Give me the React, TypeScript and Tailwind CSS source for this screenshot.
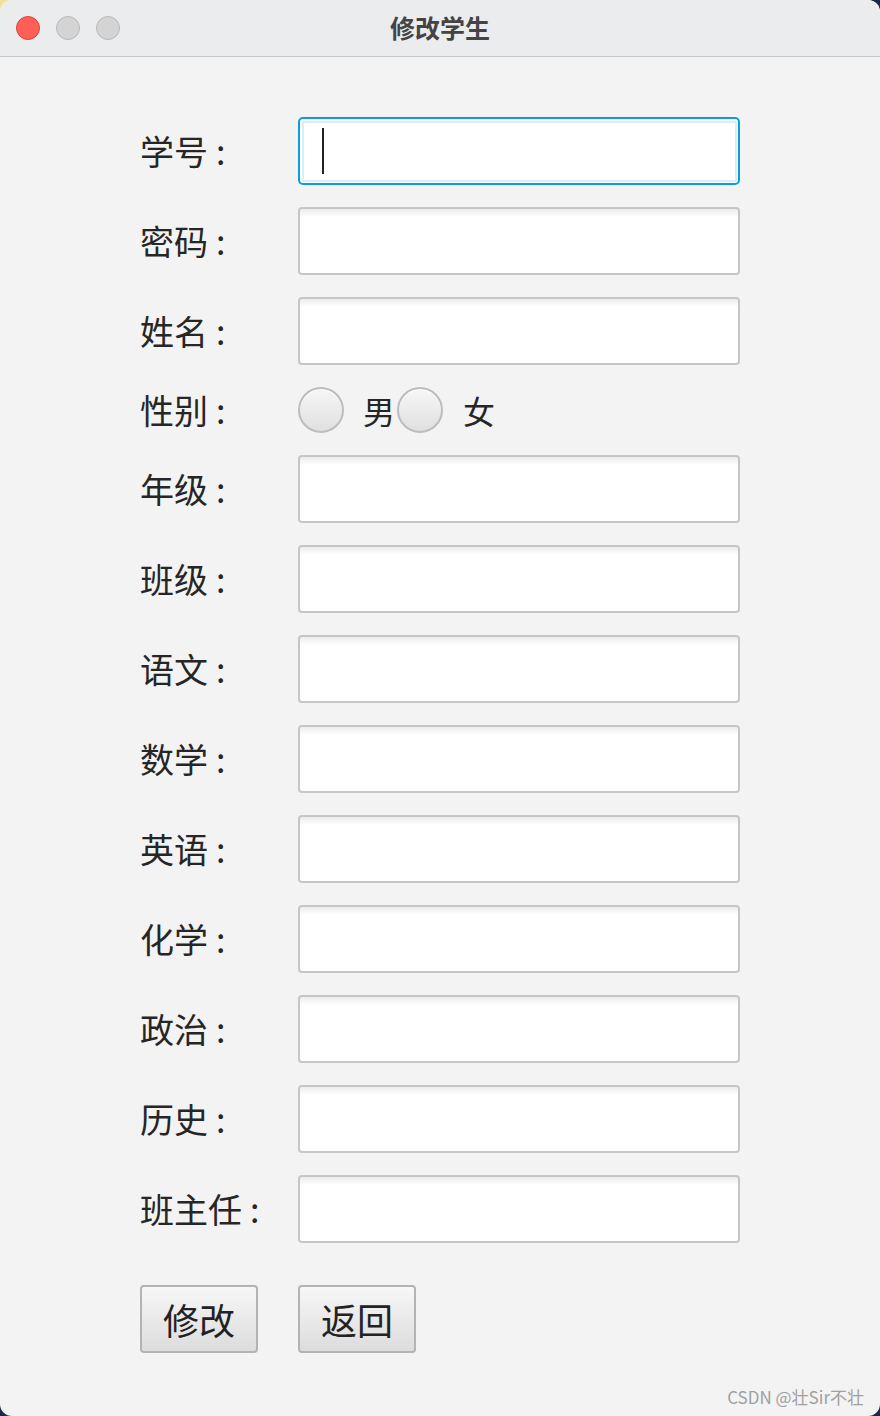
import React from "react";

const fields: string[] = [
  "学号",
  "密码",
  "姓名",
  "性别",
  "年级",
  "班级",
  "语文",
  "数学",
  "英语",
  "化学",
  "政治",
  "历史",
  "班主任",
];

const font = { fontFamily: '"Noto Sans CJK SC", "Noto Sans", sans-serif' };

function TextField({ focused }: { focused?: boolean }) {
  if (focused) {
    return (
      <div className="h-[68px] w-[442px] rounded-[5px] border-[2.5px] border-[#0a9fd9] bg-white p-[1.5px]">
        <div className="flex h-full w-full items-center rounded-[2px] border-2 border-[#d7eff8] bg-white pl-[18px]">
          <div className="h-[46px] w-[2px] bg-[#222]" />
        </div>
      </div>
    );
  }
  return (
    <div className="h-[68px] w-[442px] rounded-[4px] border-2 border-[#c6c6c6] bg-[linear-gradient(to_bottom,#ececec_0px,#ffffff_8px)]" />
  );
}

function Radio({ className = "" }: { className?: string }) {
  return (
    <div
      className={
        "h-[46px] w-[46px] rounded-full border-2 border-[#bdbdbd] bg-[linear-gradient(to_bottom,#f6f6f6,#e0e0e0)] shadow-[inset_0_1px_0_#ffffff] " +
        className
      }
    />
  );
}

function Button({ label }: { label: string }) {
  return (
    <button className="flex h-[68px] w-[118px] items-center justify-center rounded-[4px] border-2 border-[#b3b3b3] bg-[linear-gradient(to_bottom,#f7f7f7,#dcdcdc)] text-[36px] text-[#222]">
      {label}
    </button>
  );
}

export default function App() {
  return (
    <div
      className="h-[1416px] w-[880px] bg-[linear-gradient(135deg,#efe39c_0%,#efe39c_3%,#1b2a48_3.5%)]"
      style={font}
    >
      <div className="relative flex h-full w-full flex-col overflow-hidden rounded-[12px] bg-[#f3f3f3]">
        {/* title bar */}
        <div className="relative flex h-[57px] items-center border-b border-[#c9c9c9] bg-[#ebecee]">
          <div className="flex items-center gap-[16px] pl-[16px]">
            <div className="h-[24px] w-[24px] rounded-full border border-[#e0443e] bg-[#fe5f57]" />
            <div className="h-[24px] w-[24px] rounded-full border border-[#b9b9b9] bg-[#d4d4d4]" />
            <div className="h-[24px] w-[24px] rounded-full border border-[#b9b9b9] bg-[#d4d4d4]" />
          </div>
          <div className="absolute inset-x-0 top-0 flex h-[56px] items-center justify-center">
            <span className="text-[25px] font-bold text-[#444]">修改学生</span>
          </div>
        </div>

        {/* form */}
        <div className="flex flex-col gap-[22px] pl-[140px] pt-[60px]">
          {fields.map((name, i) => (
            <div key={name} className="flex items-center">
              <div className="w-[158px] text-[34px] leading-none text-[#262626]">
                {name}
                <span className="ml-[8px]">:</span>
              </div>
              {name === "性别" ? (
                <div className="flex h-[46px] items-center">
                  <Radio />
                  <span className="ml-[19px] text-[32px] leading-none text-[#262626]">男</span>
                  <Radio className="ml-[2px]" />
                  <span className="ml-[20px] text-[32px] leading-none text-[#262626]">女</span>
                </div>
              ) : (
                <TextField focused={i === 0} />
              )}
            </div>
          ))}

          <div className="mt-[20px] flex gap-[40px]">
            <Button label="修改" />
            <Button label="返回" />
          </div>
        </div>

        <div className="absolute bottom-[7px] right-[16px] text-[17px] text-[#a0a0a0]">
          CSDN @壮Sir不壮
        </div>
      </div>
    </div>
  );
}
